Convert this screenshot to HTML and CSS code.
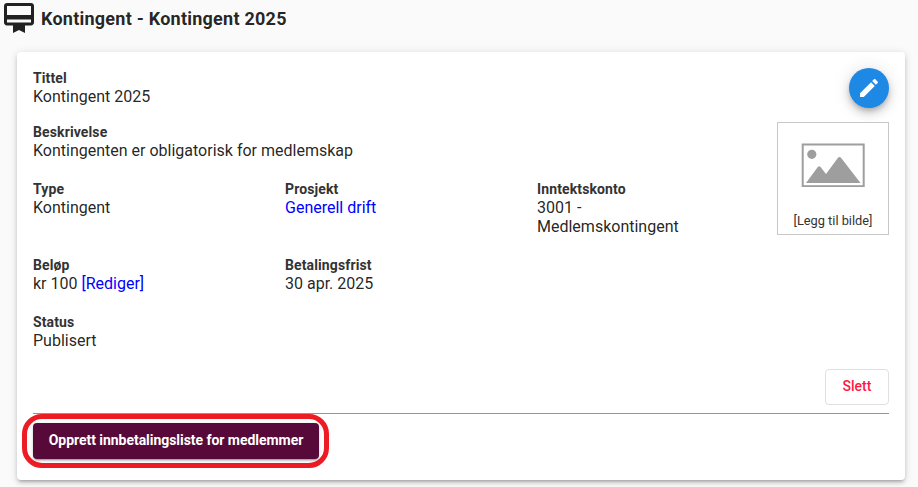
FILE: index.html
```html
<!DOCTYPE html>
<html lang="no">
<head>
<meta charset="UTF-8">
<title>Kontingent</title>
<link rel="stylesheet" href="styles.css">
</head>
<body>
<header class="page-header">
	<svg class="header-icon" viewBox="0 0 24 24"><path d="M20 2H4c-1.11 0-2 .89-2 2v11c0 1.11.89 2 2 2h4v5l4-2 4 2v-5h4c1.11 0 2-.89 2-2V4c0-1.11-.89-2-2-2zm0 13H4v-2h16v2zm0-5H4V4h16v6z"/></svg>
	<h1>Kontingent - Kontingent 2025</h1>
</header>
<main class="card">
	<div class="details">
		<div class="fields">
			<div class="field wide title">
				<label>Tittel</label>
				<span>Kontingent 2025</span>
			</div>
			<div class="field wide">
				<label>Beskrivelse</label>
				<span>Kontingenten er obligatorisk for medlemskap</span>
			</div>
			<div class="field">
				<label>Type</label>
				<span>Kontingent</span>
			</div>
			<div class="field">
				<label>Prosjekt</label>
				<span><a href="#">Generell drift</a></span>
			</div>
			<div class="field">
				<label>Inntektskonto</label>
				<span>3001 - Medlemskontingent</span>
			</div>
			<div class="field">
				<label>Beløp</label>
				<span>kr 100 <a href="#">[Rediger]</a></span>
			</div>
			<div class="field">
				<label>Betalingsfrist</label>
				<span>30 apr. 2025</span>
			</div>
			<div class="field wide">
				<label>Status</label>
				<span>Publisert</span>
			</div>
		</div>
		<div class="side">
			<button class="edit">
				<svg viewBox="0 0 24 24"><path d="M3 17.25V21h3.75L17.81 9.94l-3.75-3.75L3 17.25zM20.71 7.04c.39-.39.39-1.02 0-1.41l-2.34-2.34c-.39-.39-1.02-.39-1.41 0l-1.83 1.83 3.75 3.75 1.83-1.83z"/></svg>
			</button>
			<div class="picture">
				<svg viewBox="0 0 64 44">
					<rect x="1.700" y="1.500" width="61" height="41.700"/>
					<circle cx="10.800" cy="11.300" r="4.600"/>
					<path d="M5 40 16.800 24q1.400-1.700 2.800 0l5.400 7L37 14.800q1.500-1.800 3 0L59.500 40z"/>
				</svg>
				<span>[Legg til bilde]</span>
			</div>
		</div>
	</div>
	<div class="actions">
		<button class="delete">Slett</button>
	</div>
	<div class="footer">
		<div class="highlight">
			<button class="create">Opprett innbetalingsliste for medlemmer</button>
		</div>
	</div>
</main>
</body>
</html>
```
FILE: styles.css
```css
* {
	box-sizing: border-box;
}
body {
	margin: 0;
	height: 487px;
	overflow: hidden;
	background: #fafafa;
	color: rgba(0, 0, 0, .87);
	font: 16px/19px Roboto, sans-serif;
}
a {
	color: #00f;
	text-decoration: none;
}
button {
	padding: 0;
	border: 0;
	font: 500 14px/36px Roboto, sans-serif;
}
.page-header {
	display: flex;
	align-items: center;
	gap: 4px;
	height: 36px;
	padding-left: 1px;
}
.header-icon {
	width: 36px;
	height: 36px;
	fill: #212121;
}
h1 {
	margin: 0;
	padding-top: 2px;
	font-size: 18px;
	font-weight: 700;
	line-height: 24px;
	letter-spacing: .24px;
}
.card {
	width: 888px;
	height: 428px;
	margin: 16px 0 0 17px;
	padding: 16px;
	border-radius: 4px;
	background: #fff;
	box-shadow: 0 3px 3px -2px rgba(0, 0, 0, .2), 0 3px 4px 0 rgba(0, 0, 0, .14), 0 1px 8px 0 rgba(0, 0, 0, .12);
}
.details {
	display: flex;
	justify-content: space-between;
	height: 301px;
}
.fields {
	display: grid;
	grid-template-columns: 252px 252px 170px;
	align-content: start;
}
.field {
	padding-bottom: 19px;
}
.field.wide {
	grid-column: 1 / -1;
}
.field.title {
	padding-bottom: 16px;
}
.field label,
.field span {
	display: block;
}
.field label {
	height: 19px;
	color: #333;
	font-size: 14px;
	font-weight: 700;
	line-height: 21px;
	letter-spacing: .12px;
}
.side {
	display: flex;
	flex-direction: column;
	align-items: flex-end;
	gap: 14px;
}
.edit {
	display: flex;
	align-items: center;
	justify-content: center;
	width: 40px;
	height: 40px;
	border-radius: 50%;
	background: #1e88e5;
	box-shadow: 0 3px 5px -1px rgba(0, 0, 0, .2), 0 6px 10px 0 rgba(0, 0, 0, .14), 0 1px 18px 0 rgba(0, 0, 0, .12);
}
.edit svg {
	width: 24px;
	height: 24px;
	fill: #fff;
}
.picture {
	display: flex;
	flex-direction: column;
	align-items: center;
	width: 112px;
	height: 113px;
	padding-top: 20px;
	border: 1px solid #c8c8c8;
	color: #333;
	font-size: 12.8px;
}
.picture svg {
	width: 64px;
	height: 44px;
	margin-bottom: 24px;
	fill: #9e9e9e;
}
.picture rect {
	fill: none;
	stroke: #9e9e9e;
	stroke-width: 2;
}
.actions {
	display: flex;
	justify-content: flex-end;
	padding-bottom: 8px;
}
.delete {
	width: 64px;
	height: 36px;
	padding-bottom: 2px;
	border: 1px solid #e0e0e0;
	border-radius: 4px;
	background: #fff;
	color: #ff1744;
	line-height: 32px;
}
.footer {
	border-top: 1px solid #949494;
}
.highlight {
	width: 307px;
	height: 54px;
	margin-left: -11px;
	padding: 4px 5px 4px 6px;
	border: 5px solid #ed1c24;
	border-radius: 20px;
}
.create {
	width: 286px;
	height: 36px;
	padding-bottom: 2px;
	border-radius: 4px;
	background: #570a39;
	box-shadow: 0 3px 1px -2px rgba(0, 0, 0, .2), 0 2px 2px 0 rgba(0, 0, 0, .14), 0 1px 5px 0 rgba(0, 0, 0, .12);
	color: #fff;
	font-weight: 700;
	line-height: 34px;
	letter-spacing: -.04px;
}
```
